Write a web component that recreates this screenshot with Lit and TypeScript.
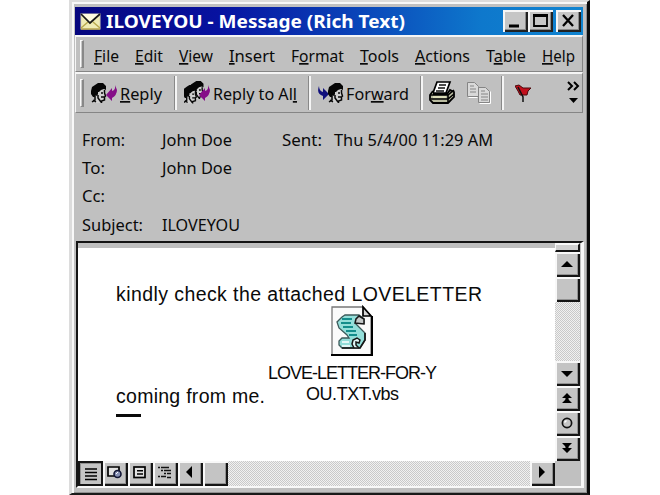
import { LitElement, html, css, svg } from "lit";
import { customElement } from "lit/decorators.js";

/** One line of UI text fitted to a width; "&" marks the access key. */
const label = (text: string, width: number, cls = "ui") => {
  const i = text.indexOf("&");
  const body =
    i < 0
      ? svg`${text}`
      : svg`${text.slice(0, i)}<tspan class="key">${text[i + 1]}</tspan>${text.slice(i + 2)}`;
  const adjust = cls === "doc" || cls === "cap" ? "spacing" : "spacingAndGlyphs";
  return html`<svg class="label ${cls}" width=${width} height="20"><text x="0" y="17" textLength=${width} lengthAdjust=${adjust}>${body}</text></svg>`;
};

const menus: [string, number][] = [
  ["&File", 25], ["&Edit", 28], ["&View", 34], ["&Insert", 46], ["F&ormat", 53],
  ["&Tools", 39], ["&Actions", 55], ["T&able", 40], ["&Help", 33],
];

const head = svg`
  <path d="M5 6h8v6l1 2-1 1v3h-3v2H5z" fill="#cfcfcf"/>
  <path d="M4 2l3-2h5l3 3v4l-2-1-3 1-2 2H7v2l-1 2-2-1v2H2L0 11V8l1-4z" fill="#060606"/>
  <path d="M13.500 7v3l1 3-1 1v3l-3 1v2M4 12v5l-3 2M7 12v3l3 4" fill="none" stroke="#080808" stroke-width="1.500"/>
  <path d="M10 10h2M10 14h3M2 17l3 2" stroke="#080808" stroke-width="1.400"/>`;
const backArrow = svg`<path d="M9 1q1 5-3 6V4L0 11l6 6v-3q5-3 5-8z" fill="#850e88"/>`;

const replyIcon = html`<svg width="27" height="22"><g transform="translate(0 1)">${head}</g><g transform="translate(15 2)">${backArrow}</g></svg>`;
const replyAllIcon = html`<svg width="27" height="24"><g transform="translate(6 0) scale(.9)">${head}</g><g transform="translate(-1 4) scale(.92)">${head}</g><g transform="translate(15 3)">${backArrow}</g></svg>`;
const forwardIcon = html`<svg width="27" height="22"><path d="M2 4q-3 8 4 10v4l6-6-6-6v4Q2 9 2 4z" fill="#10107c"/><g transform="translate(11 1)">${head}</g></svg>`;
const printIcon = html`<svg width="26" height="24"><path d="M8 1h13l-4 11H4z" fill="#fff" stroke="#000" stroke-width="1.7"/><path d="M10 4h7M9 7h7M7 10h8" stroke="#111" stroke-width="1.3"/><path d="M4 10l-3 4v5l3 3h15l6-6v-5l-4-2-3 4H4" fill="#b9bba0" stroke="#000" stroke-width="1.8"/><path d="M1 14h18l6-5M2 18h17l6-5M19 14v8" fill="none" stroke="#000" stroke-width="1.6"/><path d="M4 16h13" stroke="#e8e8c0" stroke-width="1.5"/></svg>`;
const copyIcon = html`<svg width="26" height="22"><g fill="#d9d9d9" stroke="#858585"><path d="M1.500 .5h7l4 4v10h-11z"/><path d="M12.500 5.500h7l4 4v11h-11z"/></g><path d="M4 4h4M4 7h6M4 10h6M15 9h4M15 12h7M15 15h7M15 18h7" stroke="#858585" stroke-width="1.200"/><path d="M2.500 15.500h9M13.500 21.500h11v-12" stroke="#fff" fill="none"/></svg>`;
const flagIcon = html`<svg width="17" height="19"><path d="M0 2l4-1 4 3h8l-3 3-1 4H5L3 7z" fill="#c20f1c" stroke="#4c080c"/><path d="M3 3l5 10v5" fill="none" stroke="#111" stroke-width="1.500"/></svg>`;
const moreIcon = html`<svg width="14" height="26"><path d="M1 2l4 4-4 4M7 2l4 4-4 4" fill="none" stroke="#000" stroke-width="2"/><path d="M2 18h9l-4.500 5z" fill="#000"/></svg>`;

const scrollGlyph = {
  up: svg`<path d="M6 15h12l-6-6z"/>`,
  down: svg`<path d="M6 10h12l-6 6z"/>`,
  left: svg`<path d="M14 5v12l-6-6z"/>`,
  right: svg`<path d="M9 5v12l6-6z"/>`,
  prev: svg`<path d="M7 12h10l-5-5zM7 17h10l-5-5z"/><path d="M10.500 11h3v6h-3z"/>`,
  next: svg`<path d="M7 7h10l-5 5zM7 12h10l-5 5z"/><path d="M10.500 7h3v6h-3z"/>`,
  ball: svg`<circle cx="12" cy="12" r="4.600" fill="#c6c6c6" stroke="#111" stroke-width="1.700"/><path d="M9.500 11.500l2-2" stroke="#fff" stroke-width="1.500"/>`,
  none: svg``,
  normal: svg`<path d="M7 8h12M7 11.500h12M7 15h12M7 18.500h12" stroke="#000" stroke-width="1.600"/>`,
  web: svg`<path d="M12 15H5V6h11v4" fill="#e2e2e2" stroke="#000" stroke-width="1.700"/><circle cx="14.500" cy="13" r="3.500" fill="#8791b5" stroke="#111534" stroke-width="1.600"/><path d="M13 13l2-2" stroke="#fff"/>`,
  print: svg`<rect x="6" y="6" width="11" height="10.500" fill="#e2e2e2" stroke="#000" stroke-width="1.700"/><path d="M9 9.800h6M9 13h6" stroke="#000" stroke-width="1.500"/>`,
  outline: svg`<path d="M5 6.500h2M8 6.500h8M8 9.500h2M11 9.500h7M11 12.500h2M14 12.500h4M5 15.500h2M8 15.500h5M14 16.500h4" stroke="#111" stroke-width="1.600"/>`,
};
const btn = (g: keyof typeof scrollGlyph, cls = "") =>
  html`<div class="btn ${cls}"><svg width="24" height="24">${scrollGlyph[g]}</svg></div>`;

@customElement("app-root")
export class AppRoot extends LitElement {
  static styles = css`
    :host { display: block; width: 660px; height: 495px; background: #fff; overflow: hidden; }
    * { box-sizing: border-box; }
    svg { display: block; flex: none; }
    .label { overflow: visible; }
    .ui { font: 17px "Noto Sans", sans-serif; fill: #0a0a0a; }
    .title { font: bold 18.500px "Noto Sans", sans-serif; fill: #fff; }
    .doc { font: 19.500px "Liberation Sans", sans-serif; fill: #0a0a0a; }
    .cap { font: 18px "Liberation Sans", sans-serif; fill: #0a0a0a; }
    .key { text-decoration: underline; text-decoration-thickness: 1.500px; text-underline-offset: 2px; }
    .window {
      margin-left: 69px; width: 521px; height: 495px; background: #c0c0c0;
      border: solid; border-width: 2px 3px 2px 3px; border-color: #dcdcdc #0b0b0b #1a1a1a #dcdcdc;
      box-shadow: inset 2px 2px 0 #f8f8f8, inset -1px -1px 0 #909090;
      padding: 5px 3px 0 3px; display: flex; flex-direction: column;
    }
    .titlebar {
      height: 28px; display: flex; align-items: center; padding: 0 2px 0 5px; width: 508px;
      background: linear-gradient(90deg, #06067e 0%, #0712a0 28%, #0a43b8 55%, #0e78cc 80%, #1084d0 100%);
    }
    .titlebar .label { margin: -1px 0 0 5px; }
    .caps { margin-left: auto; display: flex; }
    .cap-btn {
      width: 25px; height: 22px; background: #c6c6c6;
      box-shadow: inset 2px 2px 0 #f6f6f6, inset -2px -2px 0 #222, inset -3px -3px 0 #8a8a8a;
    }
    .gap { margin-left: 3px; }
    .bar {
      width: 508px; display: flex; align-items: center; border: solid; border-width: 2px 1px 1px 1px;
      border-color: #f5f5f5 #858585 #858585 #f5f5f5;
    }
    .menu { height: 37px; padding-left: 4px; }
    .tools { height: 41px; padding-left: 4px; }
    .grip { width: 4px; height: 28px; background: #c8c8c8; border: solid; border-width: 1px 2px 1px 1px; border-color: #fafafa #888 #888 #fafafa; flex: none; }
    .items { display: flex; gap: 16px; margin: 1px 0 0 10px; }
    .sep { width: 3px; height: 34px; border-left: 1px solid #898989; border-right: 2px solid #f5f5f5; flex: none; }
    .tool { display: flex; align-items: center; }
    .tool .label { margin-left: 2px; }
    .header {
      height: 128px; padding: 16px 0 0 7px; display: grid; align-content: start;
      grid-template-columns: 80px 120px 52px 1fr; grid-auto-rows: 28.200px;
    }
    .pane {
      margin-left: 1px; width: 508px; height: 247px; display: grid;
      grid-template-columns: 477px 26px; grid-template-rows: 218px 25px;
      border: solid; border-width: 2px 3px 2px 2px; border-color: #151515 #f8f8f8 #f8f8f8 #151515;
    }
    .page { background: #fff; border-top: 5px solid #c0c0c0; padding: 36px 0 0 38px; }
    .second { display: flex; }
    .second .coming { margin-top: 82px; }
    .file { width: 170px; margin: 1px 0 0 2px; display: flex; flex-direction: column; align-items: center; }
    .names { margin: 5px 0 1px; }
    .caret { width: 25px; height: 3px; background: #0a0a0a; margin-top: 8px; }
    .dither {
      background: repeating-conic-gradient(#c9c9c9 0 25%, #f1f1f1 0 50%) 0 0 / 2px 2px;
    }
    .vscroll { display: flex; flex-direction: column; width: 25px; }
    .split { height: 9px; background: #d0d0d0; border: solid; border-width: 2px 2px 2px 1px; border-color: #f8f8f8 #151515 #151515 #f8f8f8; }
    .hscroll { display: flex; }
    .grow { flex: 1; }
    .btn {
      width: 25px; height: 25px; flex: none; background: #c4c4c4;
      box-shadow: inset 2px 2px 0 #f8f8f8, inset -2px -2px 0 #151515, inset -3px -3px 0 #929292;
    }
    .pressed { box-shadow: inset 2px 2px 0 #151515, inset -2px -2px 0 #151515, inset 3px 3px 0 #929292; }
  `;

  render() {
    return html`<div class="window">
      <div class="titlebar">
        <svg width="21" height="17"><rect x="1" y="1" width="19" height="15" fill="#f0ecb4" stroke="#d8d4b8"/><path d="M1 15l7-6M20 15l-7-6" stroke="#b9a94e" stroke-width="1.500"/><path d="M1 1l9 9 10-9" fill="#fffce0" stroke="#181818" stroke-width="1.700"/><path d="M1 16h19" stroke="#bba94e" stroke-width="1.500"/></svg>
        ${label("ILOVEYOU - Message (Rich Text)", 299, "title")}
        <div class="caps">
          <div class="cap-btn"><svg width="25" height="22"><path d="M6 16h10" stroke="#000" stroke-width="3"/></svg></div>
          <div class="cap-btn"><svg width="25" height="22"><path d="M6 5h13v11H6z" fill="none" stroke="#000" stroke-width="1.800"/><path d="M5 5.500h15" stroke="#000" stroke-width="3"/></svg></div>
          <div class="cap-btn gap"><svg width="25" height="22"><path d="M7 5l10 11M17 5L7 16" stroke="#000" stroke-width="2.300"/></svg></div>
        </div>
      </div>
      <div class="bar menu">
        <div class="grip"></div>
        <div class="items">${menus.map(([m, w]) => label(m, w))}</div>
      </div>
      <div class="bar tools">
        <div class="grip"></div>
        <div class="tool" style="width:90px;padding-left:7px">${replyIcon}${label("&Reply", 42)}</div>
        <div class="sep"></div>
        <div class="tool" style="width:131px;padding-left:7px">${replyAllIcon}${label("Reply to Al&l", 84)}</div>
        <div class="sep"></div>
        <div class="tool" style="width:109px;padding-left:6px">${forwardIcon}${label("For&ward", 63)}</div>
        <div class="sep"></div>
        <div class="tool" style="width:78px;padding-left:6px;gap:11px">${printIcon}${copyIcon}</div>
        <div class="sep"></div>
        <div class="tool" style="width:63px;padding-left:11px">${flagIcon}</div>
        ${moreIcon}
      </div>
      <div class="header">
        ${label("From:", 43)}${label("John Doe", 70)}${label("Sent:", 40)}${label("Thu 5/4/00 11:29 AM", 159)}
        ${label("To:", 23)}${label("John Doe", 70)}<span></span><span></span>
        ${label("Cc:", 23)}<span></span><span></span><span></span>
        ${label("Subject:", 61)}${label("ILOVEYOU", 78)}
      </div>
      <div class="pane">
        <div class="page">
          ${label("kindly check the attached LOVELETTER", 366, "doc")}
          <div class="second">
            <div class="coming">${label("coming from me.", 149, "doc")}<div class="caret"></div></div>
            <div class="file">
              <svg width="44" height="52"><path d="M2 2h31l8 9v39H2z" fill="#fafafa" stroke="#777" stroke-width="1.300"/><path d="M1 50h41V11" fill="none" stroke="#000" stroke-width="2"/><path d="M33 2v9h8z" fill="#d6d6d6" stroke="#000" stroke-width="1.700"/>
                <path d="M12 12l3-2h14l5 4v4h-5l-2-2-1 3 9 9v7l-5 8H12l-3-3v-4l3-3h7l-2-3-8-7-2-6 3-3z" fill="#93ded9" stroke="#3c5a5a" stroke-width="1.300"/>
                <path d="M29 11l5 3v5l-9-1 1-4z" fill="#c5c9c9" stroke="#161616" stroke-width="1.500"/>
                <path d="M24 43l-2-4 1-4 4-2 3 2-1 3-3-1v3l3 3" fill="#e1f8f7" stroke="#161616" stroke-width="1.500"/>
                <path d="M35 28v7l-5 8H12" fill="none" stroke="#161616" stroke-width="1.700"/>
                <path d="M12 14h10M11 18h10M13 22h10M16 26h10M19 30h8" stroke="#138d8b" stroke-width="2"/>
                <path d="M12 37h7M12 41h8" stroke="#fff" stroke-width="1.500"/></svg>
              <div class="names">${label("LOVE-LETTER-FOR-Y", 169, "cap")}</div>
              ${label("OU.TXT.vbs", 93, "cap")}
            </div>
          </div>
        </div>
        <div class="vscroll">
          <div class="split"></div>${btn("up")}${btn("none")}
          <div class="dither grow"></div>
          ${btn("down")}${btn("prev")}${btn("ball")}${btn("next")}
        </div>
        <div class="hscroll">
          ${btn("normal", "pressed")}${btn("web")}${btn("print")}${btn("outline")}${btn("left")}${btn("none")}
          <div class="dither grow"></div>${btn("right")}
        </div>
        <div></div>
      </div>
    </div>`;
  }
}
